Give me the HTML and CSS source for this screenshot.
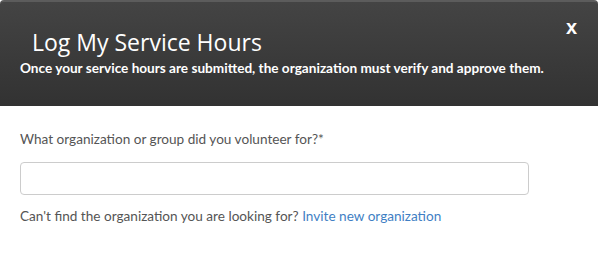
FILE: index.html
```html
<!DOCTYPE html>
<html lang="en">
  <head>
    <meta charset="UTF-8" />
    <meta name="viewport" content="width=device-width, initial-scale=1.0" />
    <title>Log My Service Hours</title>
    <link rel="stylesheet" href="styles.css">
  </head>
  <body>
    <div class="modal">
      <div class="modal-header">
        <button class="close-button">x</button>
        <h2>Log My Service Hours</h2>
        <p class="subtitle">Once your service hours are submitted, the organization must verify and approve them.</p>
      </div>
      <div class="modal-body">
        <label for="organization">What organization or group did you volunteer for?*</label>
        <input type="text" id="organization" />
        <p class="helper">
          Can't find the organization you are looking for?
          <a href="#">Invite new organization</a>
        </p>
      </div>
    </div>
  </body>
</html>
```

FILE: styles.css
```css
body {
  margin: 0;
  background-color: #fff;
  font-family: Lato, "Open Sans", sans-serif;
}
.modal {
  width: 598px;
  height: 256px;
  background: white;
}
.modal-header {
  position: relative;
  height: 106px;
  box-sizing: border-box;
  padding: 25px 20px 0;
  background: linear-gradient(#444, #323232);
  border-top: 2px solid #5c5c5c;
  border-radius: 4px 4px 0 0;
  color: white;
}
.modal-header h2 {
  margin: 0 0 0 12px;
  font-family: "Open Sans", sans-serif;
  font-weight: normal;
  font-size: 23px;
  line-height: 30px;
}
.subtitle {
  margin: 2px 0 0;
  font-size: 13.6px;
  font-weight: bold;
  line-height: 18px;
}
.close-button {
  position: absolute;
  top: 14px;
  right: 21px;
  padding: 0;
  background: none;
  border: none;
  color: white;
  font-family: Arial, "Liberation Sans", sans-serif;
  font-weight: bold;
  font-size: 20px;
  cursor: pointer;
}
.modal-body {
  padding: 24px 20px 0;
  color: #555;
  font-size: 13.6px;
}
label {
  display: block;
  line-height: 18px;
  margin-bottom: 14px;
}
input {
  display: block;
  width: 509px;
  height: 33px;
  box-sizing: border-box;
  border: 1px solid #ccc;
  border-radius: 4px;
}
.helper {
  margin: 12px 0 0;
  line-height: 18px;
}
.helper a {
  color: #3f7fc4;
  text-decoration: none;
}
```
